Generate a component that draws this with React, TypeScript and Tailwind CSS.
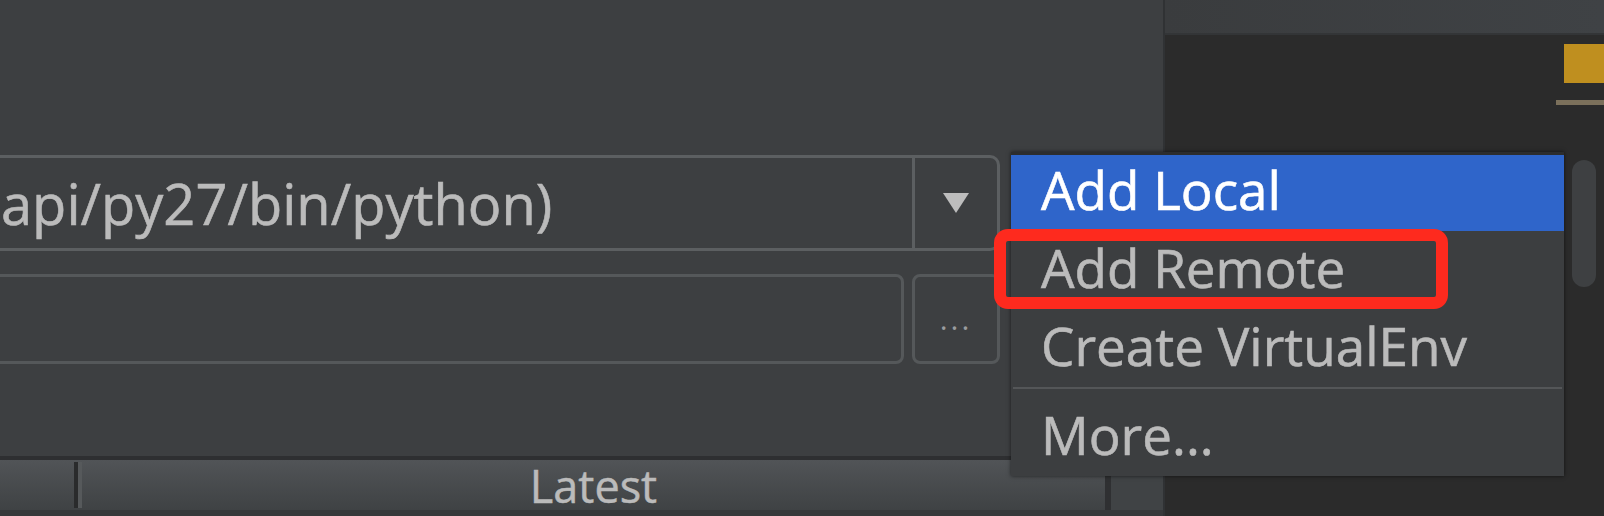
import React from 'react'

const font = { fontFamily: '"Open Sans", "Liberation Sans", sans-serif' }

const MenuRow: React.FC<{ label: string; active?: boolean; className?: string }> = ({ label, active, className }) => (
  <div
    className={`flex items-center pl-[30px] text-[53px] leading-none [-webkit-text-stroke:0.6px_currentColor] ${
      active ? 'bg-[#2f65ca] text-white' : 'text-[#bbbbbb]'
    } ${className ?? ''}`}
  >
    {label}
  </div>
)

const App: React.FC = () => {
  return (
    <div className="relative w-[1604px] h-[516px] overflow-hidden flex bg-[#2b2b2b]" style={font}>
      {/* settings dialog */}
      <div className="w-[1163px] h-full bg-[#3d3f41] flex flex-col overflow-hidden shrink-0">
        <div className="h-[155px] shrink-0" />

        {/* interpreter combo */}
        <div className="flex h-[96px] w-[1012px] -ml-[12px] shrink-0 border-[3px] border-[#5c5f61] rounded-r-[10px]">
          <div className="flex-1 flex items-center overflow-hidden pl-[10px]">
            <span className="text-[56px] leading-none text-[#bbbbbb] whitespace-nowrap [-webkit-text-stroke:0.6px_currentColor]">
              api/py27/bin/python)
            </span>
          </div>
          <div className="w-[85px] border-l-[3px] border-[#5c5f61] flex items-center justify-center">
            <svg width="28" height="22" viewBox="0 0 28 22">
              <path d="M1 1 L27 1 L14 21 Z" fill="#bdbdbd" />
            </svg>
          </div>
        </div>

        <div className="h-[23px] shrink-0" />

        {/* path field */}
        <div className="flex h-[90px] -ml-[12px] shrink-0 gap-[8px]">
          <div className="w-[916px] border-[3px] border-[#55585a] rounded-r-[8px]" />
          <div className="w-[88px] border-[3px] border-[#55585a] rounded-[8px] flex items-center justify-center">
            <span className="text-[30px] leading-none text-[#9a9c9e] tracking-[3px]">...</span>
          </div>
        </div>

        <div className="flex-1" />

        {/* packages table header */}
        <div className="shrink-0 flex flex-col">
          <div className="h-[4px] bg-[#2e2f31]" />
          <div className="flex h-[50px]">
            <div className="w-[1105px] flex bg-gradient-to-b from-[#515457] to-[#3f4244]">
              <div className="w-[74px]" />
              <div className="flex my-[2px]">
                <div className="w-[4px] bg-[#2a2b2c]" />
                <div className="w-[4px] bg-[#56595b]" />
              </div>
              <div className="flex-1 flex items-center justify-center">
                <span className="text-[45px] leading-none text-[#bbbbbb] [-webkit-text-stroke:0.5px_currentColor]">Latest</span>
              </div>
            </div>
            <div className="w-[6px] bg-[#2f3032]" />
            <div className="flex-1 bg-[#404345]" />
          </div>
          <div className="h-[6px] bg-[#37383a]" />
        </div>
      </div>

      {/* editor side */}
      <div className="flex-1 flex flex-col border-l-2 border-[#303234]">
        <div className="h-[35px] shrink-0 bg-gradient-to-r from-[#3a3c3e] to-[#3f4245] border-b-2 border-[#333537]" />
        <div className="flex-1 flex flex-col items-end">
          <div className="mt-[9px] w-[40px] h-[39px] bg-[#bf8f1f]" />
          <div className="mt-[17px] w-[48px] h-[5px] bg-[#7b705b]" />
          <div className="mt-[55px] mr-[8px] w-[24px] h-[127px] rounded-full bg-[#3e4042]" />
        </div>
      </div>

      {/* popup menu */}
      <div className="absolute left-[1011px] top-[152px] w-[553px] h-[324px] bg-[#3c3e40] border-t-[3px] border-[#2c2d2e] shadow-[0_0_4px_rgba(0,0,0,0.6)] flex flex-col">
        <MenuRow label="Add Local" active className="h-[76px] pb-[8px]" />
        <MenuRow label="Add Remote" className="h-[78px] pb-[6px]" />
        <MenuRow label="Create VirtualEnv" className="h-[78px] pb-[6px]" />
        <div className="h-[2px] bg-[#545658] mx-[2px]" />
        <MenuRow label="More..." className="flex-1 pt-[4px]" />
      </div>

      {/* highlight annotation */}
      <div className="absolute left-[994px] top-[229px] w-[454px] h-[80px] border-[12px] border-[#fe2a1e] rounded-[14px]" />
    </div>
  )
}

export default App
